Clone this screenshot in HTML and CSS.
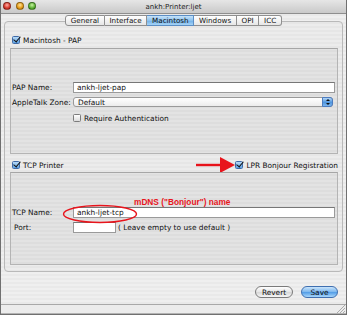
FILE: index.html
```html
<!DOCTYPE html>
<html lang="en">
<head>
    <meta charset="UTF-8">
    <meta name="viewport" content="width=device-width, initial-scale=1.0">
    <title>ankh:Printer:ljet</title>
    <link rel="stylesheet" href="styles.css">
</head>
<body>
    <div class="window">
        <div class="titlebar">
            <div class="lights">
                <span class="light red"></span>
                <span class="light yellow"></span>
                <span class="light green"></span>
            </div>
            <div class="title">ankh:Printer:ljet</div>
        </div>

        <div class="main">
            <div class="tabs">
                <span class="tab">General</span>
                <span class="tab">Interface</span>
                <span class="tab active">Macintosh</span>
                <span class="tab">Windows</span>
                <span class="tab">OPI</span>
                <span class="tab">ICC</span>
            </div>

            <div class="tabbox">
                <div class="checkRow">
                    <label class="check"><span class="box on"></span>Macintosh - PAP</label>
                </div>
                <div class="group pap">
                    <div class="formLine">
                        <span class="label">PAP Name:</span>
                        <span class="field wide">ankh-ljet-pap</span>
                    </div>
                    <div class="formLine popLine">
                        <span class="label">AppleTalk Zone:</span>
                        <span class="popup">Default<span class="arrows"></span></span>
                    </div>
                    <div class="formLine authLine">
                        <span class="label"></span>
                        <label class="check"><span class="box"></span>Require Authentication</label>
                    </div>
                </div>

                <div class="checkRow tcpRow">
                    <label class="check"><span class="box on"></span>TCP Printer</label>
                    <!-- red annotation arrow -->
                    <svg class="arrow" width="40" height="18" viewBox="0 0 40 18">
                        <line x1="0" y1="9" x2="26" y2="9" stroke="#e8141c" stroke-width="2.4"/>
                        <polygon points="24,1 39,9 24,17" fill="#e8141c"/>
                    </svg>
                    <label class="check"><span class="box on"></span>LPR Bonjour Registration</label>
                </div>
                <div class="group tcp">
                    <div class="note">mDNS ("Bonjour") name</div>
                    <svg class="ring" width="76" height="20" viewBox="0 0 76 20">
                        <ellipse cx="38" cy="10" rx="36.5" ry="8.5" fill="none" stroke="#e8141c" stroke-width="1.4"/>
                    </svg>
                    <div class="formLine">
                        <span class="label">TCP Name:</span>
                        <span class="field wide">ankh-ljet-tcp</span>
                    </div>
                    <div class="formLine portLine">
                        <span class="label">Port:</span>
                        <span class="field port"></span>
                        <span class="hint">( Leave empty to use default )</span>
                    </div>
                </div>
            </div>

            <div class="buttons">
                <span class="btn">Revert</span>
                <span class="btn default">Save</span>
            </div>
        </div>

        <div class="statusbar">
            <svg class="grip" width="10" height="9" viewBox="0 0 10 9">
                <path d="M9 1 L1 9 M9 4 L4 9 M9 7 L7 9" stroke="#9a9a9a" stroke-width="0.8"/>
            </svg>
        </div>
    </div>
</body>
</html>
```

FILE: styles.css
```css
* {
    margin: 0;
    padding: 0;
    box-sizing: border-box;
}

body {
    font-family: 'DejaVu Sans', sans-serif;
    font-size: 7.4px;
    color: #111;
    background-color: #fff;
}

.window {
    width: 347px;
    height: 315px;
    border: 1px solid #707070;
    border-top: none;
    display: flex;
    flex-direction: column;
    background-color: #ededed;
    background-image: repeating-linear-gradient(#efefef 0 2px, #e9e9e9 2px 4px);
}

/* title bar */
.titlebar {
    height: 14px;
    position: relative;
    display: flex;
    align-items: center;
    justify-content: center;
    background: linear-gradient(#e6e6e6, #c9c9c9);
    border-bottom: 1px solid #8e8e8e;
}

.lights {
    position: absolute;
    left: 2px;
    top: 2px;
    display: flex;
    gap: 4.5px;
}

.light {
    width: 8px;
    height: 8px;
    border-radius: 50%;
    border: 1px solid rgba(0, 0, 0, 0.35);
}

.red { background: radial-gradient(circle at 50% 35%, #ffb0a8, #d8382c 60%, #a51d14); }
.yellow { background: radial-gradient(circle at 50% 35%, #ffe39a, #e69d18 60%, #b2700c); }
.green { background: radial-gradient(circle at 50% 35%, #c9f2a4, #5db334 60%, #347f19); }

.title {
    font-size: 7px;
    color: #222;
}

/* content */
.main {
    flex: 1;
    padding: 1px 3px 0;
    display: flex;
    flex-direction: column;
}

.tabs {
    display: flex;
    justify-content: center;
    height: 11px;
    margin-bottom: -5px;
    position: relative;
    z-index: 1;
}

.tab {
    display: flex;
    align-items: center;
    padding: 0 4.7px;
    font-size: 7.2px;
    background: linear-gradient(#ffffff, #e6e6e6);
    border: 1px solid #8f8f8f;
    border-left: none;
}

.tab:first-child {
    border-left: 1px solid #8f8f8f;
    border-radius: 3px 0 0 3px;
}

.tab:last-child {
    border-radius: 0 3px 3px 0;
}

.tab.active {
    background: linear-gradient(#c6e3fa, #8cc2ee 50%, #6daee9 51%, #a6d4f6);
    border-color: #5c8ec4;
}

.tabbox {
    height: 251px;
    border: 1px solid #b9b9b9;
    border-radius: 4px;
    padding: 12px 4px 0 5px;
    background-color: rgba(0, 0, 0, 0.01);
}

.checkRow {
    height: 12px;
    margin-bottom: 2px;
    padding-left: 2px;
    display: flex;
    align-items: center;
}

.tcpRow {
    margin-top: 5px;
    margin-bottom: 1px;
    position: relative;
    justify-content: space-between;
    padding-right: 0;
}

.check {
    display: flex;
    align-items: center;
    gap: 3px;
}

.box {
    width: 8px;
    height: 8px;
    border: 1px solid #7c7c7c;
    border-radius: 1.5px;
    background: linear-gradient(#ffffff, #dcdcdc);
    position: relative;
}

.box.on {
    border-color: #3f6aa8;
    background: linear-gradient(#b7daf7, #5b9fe2);
}

.box.on::after {
    content: "";
    position: absolute;
    left: 1.5px;
    top: -2px;
    width: 3px;
    height: 6px;
    border-right: 1.6px solid #111;
    border-bottom: 1.6px solid #111;
    transform: rotate(40deg);
}

.group {
    border: 1px solid #b4b4b4;
    border-top-color: #a6a6a6;
    background-color: rgba(0, 0, 0, 0.035);
    padding: 0 2px 0 1px;
}

.pap {
    height: 106px;
    padding-top: 33px;
}

.tcp {
    height: 93px;
    padding-top: 34px;
    position: relative;
}

.formLine {
    display: flex;
    align-items: center;
    height: 11px;
    margin-bottom: 4px;
}

.popLine {
    height: 10px;
    margin-bottom: 5px;
}

.authLine {
    height: 12px;
}

.label {
    width: 61px;
    flex-shrink: 0;
}

.portLine .label {
    padding-left: 2px;
}

.field {
    height: 11px;
    background-color: #fff;
    border: 1px solid #9a9a9a;
    border-top-color: #777;
    display: flex;
    align-items: center;
    padding-left: 3px;
}

.field.wide {
    flex: 1;
}

.field.port {
    width: 43px;
}

.hint {
    margin-left: 2px;
}

.popup {
    flex: 1;
    height: 10px;
    margin-right: 2px;
    background: linear-gradient(#ffffff, #ececec);
    border: 1px solid #999;
    border-radius: 3px;
    display: flex;
    align-items: center;
    padding-left: 4px;
    position: relative;
}

.arrows {
    position: absolute;
    right: -1px;
    top: -1px;
    width: 11px;
    height: 10px;
    border-radius: 0 3px 3px 0;
    border: 1px solid #4c7cc0;
    background: linear-gradient(#b3d6f6, #4f95de 55%, #7cb6ee);
}

.arrows::before,
.arrows::after {
    content: "";
    position: absolute;
    left: 2.5px;
    border-left: 2px solid transparent;
    border-right: 2px solid transparent;
}

.arrows::before {
    top: 1px;
    border-bottom: 2.5px solid #111;
}

.arrows::after {
    bottom: 1px;
    border-top: 2.5px solid #111;
}

/* annotations */
.arrow {
    position: absolute;
    left: 186px;
    top: -3px;
}

.note {
    position: absolute;
    left: 123px;
    top: 24px;
    color: #e8141c;
    font-family: 'Liberation Sans', sans-serif;
    font-weight: bold;
    font-size: 8.3px;
}

.ring {
    position: absolute;
    left: 51px;
    top: 31px;
}

/* buttons */
.buttons {
    display: flex;
    justify-content: flex-end;
    gap: 8px;
    margin-top: 14px;
    padding-right: 5px;
}

.btn {
    width: 38px;
    height: 12px;
    border-radius: 6px;
    border: 1px solid #7a7a7a;
    background: linear-gradient(#ffffff, #e4e4e4 50%, #d6d6d6 51%, #f6f6f6);
    display: flex;
    align-items: center;
    justify-content: center;
}

.btn.default {
    width: 37px;
    border-color: #3f6fb0;
    background: linear-gradient(#c9e4fb, #7ab6ee 50%, #4f9be6 51%, #a8d6fb);
}

.statusbar {
    height: 10px;
    border-top: 1px solid #a9a9a9;
    border-bottom: 1px solid #b3b3b3;
    background-color: #ececec;
    position: relative;
}

.grip {
    position: absolute;
    right: 0;
    bottom: 0;
}
```
